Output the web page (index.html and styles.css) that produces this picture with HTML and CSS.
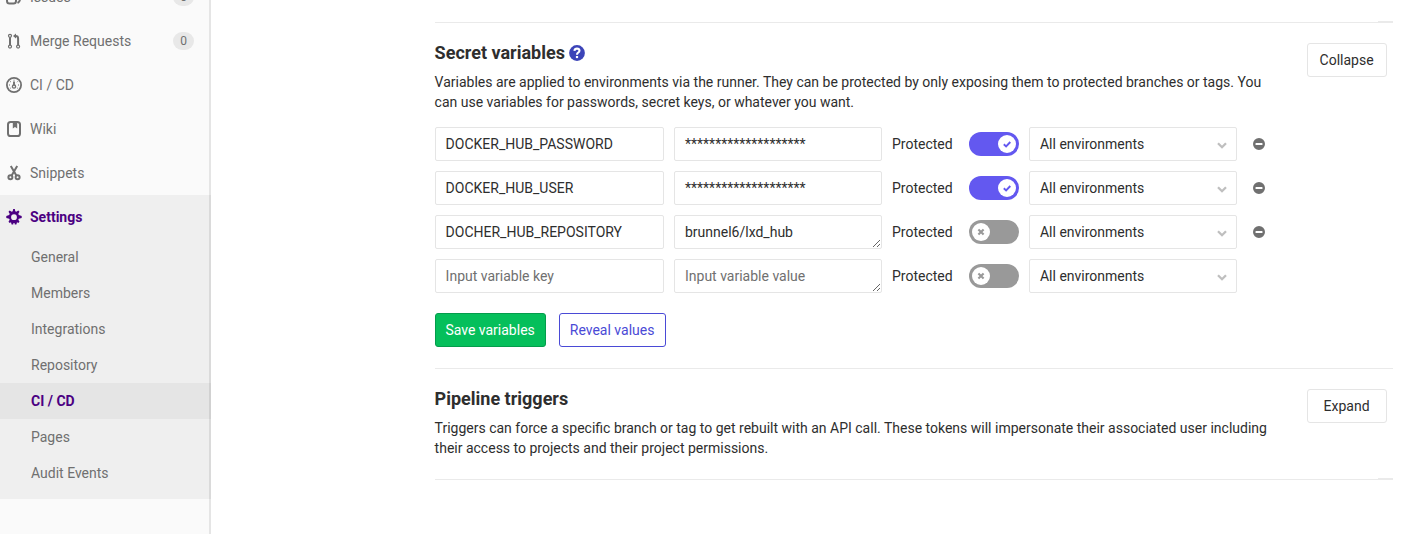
FILE: index.html
```html
<!DOCTYPE html>
<html lang="en">
<head>
<meta charset="utf-8">
<title>CI / CD Settings</title>
<link rel="stylesheet" href="styles.css">
</head>
<body>
<svg class="sprite" aria-hidden="true">
  <symbol id="check" viewBox="0 0 18 18"><path d="M5.800 9.300l2.300 2.200 4.200-4.500" fill="none" stroke="currentColor" stroke-width="1.900"/></symbol>
  <symbol id="cross" viewBox="0 0 18 18"><path d="M6.400 6.400l5.200 5.200M11.600 6.400l-5.200 5.200" fill="none" stroke="currentColor" stroke-width="2.100"/></symbol>
  <symbol id="chevron" viewBox="0 0 10 7"><path d="M1 1.200l4 4 4-4" fill="none" stroke="currentColor" stroke-width="2.300"/></symbol>
  <symbol id="minus" viewBox="0 0 12 12"><path fill="currentColor" fill-rule="evenodd" d="M6 0a6 6 0 1 0 0 12A6 6 0 0 0 6 0zM3 5h6q.5 0 .5.5v1q0 .5-.5.5H3q-.5 0-.5-.5v-1Q2.500 5 3 5z"/></symbol>
</svg>
<div class="page">
  <nav class="sidebar">
    <a class="item"><svg class="icon" viewBox="0 0 16 16"><g fill="none" stroke="currentColor" stroke-width="2"><rect x="1" y="3" width="9" height="11.500" rx="2.500"/><path d="M11 1.500c3 0 3 1 3 3v5.500c0 2-.5 3-2.500 4"/></g></svg><span>Issues</span><span class="badge">0</span></a>
    <a class="item"><svg class="icon" viewBox="0 0 16 16"><g fill="none" stroke="currentColor"><circle cx="4" cy="2.800" r="1.500" stroke-width="1.200"/><circle cx="4" cy="13.600" r="1.500" stroke-width="1.200"/><circle cx="12.100" cy="13.600" r="1.500" stroke-width="1.200"/><path d="M4 4.300v7.700M12.100 12V5.500q0-2.400-2.600-2.400" stroke-width="2"/></g><path d="M10 .4v5.200L7 3z" fill="currentColor"/></svg><span>Merge Requests</span><span class="badge">0</span></a>
    <a class="item"><svg class="icon" viewBox="0 0 16 16"><g fill="none" stroke="currentColor"><circle cx="8" cy="8" r="7.100" stroke-width="1.800"/><circle cx="8" cy="9.600" r="1.600" stroke-width="1.300"/><path d="M8 8V4.500" stroke-width="1.900"/><path d="M8 2.700v1M3 8h1M12 8h1M4.200 4.400l.8.800M11.800 4.400l-.8.800M4.300 11.300l.8-.6M11.700 11.300l-.8-.6"/></g></svg><span>CI / CD</span></a>
    <a class="item"><svg class="icon" viewBox="0 0 16 16"><rect x="2" y="1" width="12" height="14" rx="2.600" fill="none" stroke="currentColor" stroke-width="2"/><path d="M6.800 2h4.400v5.400L9 5.900 6.800 7.400z" fill="currentColor"/></svg><span>Wiki</span></a>
    <a class="item"><svg class="icon" viewBox="0 0 16 16"><g fill="none" stroke="currentColor" stroke-width="2"><circle cx="4.400" cy="12.300" r="2"/><circle cx="11.600" cy="12.300" r="2"/><path d="M5.500 10.700L11.200 1M10.500 10.700L4.800 1" stroke-width="2"/></g></svg><span>Snippets</span></a>
    <div class="group">
      <a class="item current"><svg class="icon" viewBox="0 0 16 16"><path fill="currentColor" fill-rule="evenodd" d="M6.700 2.300L7.200.1h1.600l.5 2.200 1 .4L12.300 1.500l1.200 1.200-1.200 2 .5 1.300 2.900.9v2.200l-2.900.6-.5 1.100 1.200 2-1.200 1.200-1.300-.7-.6 2.300H8.800l-.3-1.500h-1l-.3 1.500H5.600L5 13.300l-1.300.7-1.200-1.200 1.200-2-.5-1.100L.3 9.100V6.900L3.200 6l.5-1.300-1.200-2 1.200-1.200 2 1.200zM8 5.300a2.900 2.900 0 1 0 0 5.800 2.900 2.900 0 0 0 0-5.800z"/></svg><span>Settings</span></a>
      <a class="sub">General</a>
      <a class="sub">Members</a>
      <a class="sub">Integrations</a>
      <a class="sub">Repository</a>
      <a class="sub active">CI / CD</a>
      <a class="sub">Pages</a>
      <a class="sub">Audit Events</a>
    </div>
  </nav>
  <main class="content">
    <section class="settings previous"></section>
    <section class="settings secrets">
      <div class="heading">
        <div>
          <h4>Secret variables <svg class="help" viewBox="0 0 16 16"><circle cx="8" cy="8" r="7.900" fill="#3c44b8"/><path d="M5.400 5.900Q5.700 3.600 8 3.600t2.500 2q0 1.300-1.400 2.100Q8 8.300 8 9.700" fill="none" stroke="#fff" stroke-width="2.100"/><path d="M6.900 11h2.200v2.100H6.900z" fill="#fff"/></svg></h4>
          <p>Variables are applied to environments via the runner. They can be protected by only exposing them to protected branches or tags. You<br>can use variables for passwords, secret keys, or whatever you want.</p>
        </div>
        <button class="btn">Collapse</button>
      </div>
      <div class="variables">
        <div class="row">
          <input class="field key" value="DOCKER_HUB_PASSWORD"><div class="field value">********************</div>
          <span class="label">Protected</span><span class="toggle on"><svg><use href="#check"/></svg></span>
          <div class="field select">All environments<svg><use href="#chevron"/></svg></div><svg class="remove"><use href="#minus"/></svg>
        </div>
        <div class="row">
          <input class="field key" value="DOCKER_HUB_USER"><div class="field value">********************</div>
          <span class="label">Protected</span><span class="toggle on"><svg><use href="#check"/></svg></span>
          <div class="field select">All environments<svg><use href="#chevron"/></svg></div><svg class="remove"><use href="#minus"/></svg>
        </div>
        <div class="row">
          <input class="field key" value="DOCHER_HUB_REPOSITORY"><textarea class="field value" rows="1">brunnel6/lxd_hub</textarea>
          <span class="label">Protected</span><span class="toggle"><svg><use href="#cross"/></svg></span>
          <div class="field select">All environments<svg><use href="#chevron"/></svg></div><svg class="remove"><use href="#minus"/></svg>
        </div>
        <div class="row">
          <input class="field key" placeholder="Input variable key"><textarea class="field value" rows="1" placeholder="Input variable value"></textarea>
          <span class="label">Protected</span><span class="toggle"><svg><use href="#cross"/></svg></span>
          <div class="field select">All environments<svg><use href="#chevron"/></svg></div>
        </div>
      </div>
      <div class="actions"><button class="btn save">Save variables</button><button class="btn reveal">Reveal values</button></div>
    </section>
    <section class="settings triggers">
      <div class="heading">
        <div>
          <h4>Pipeline triggers</h4>
          <p>Triggers can force a specific branch or tag to get rebuilt with an API call. These tokens will impersonate their associated user including<br>their access to projects and their project permissions.</p>
        </div>
        <button class="btn">Expand</button>
      </div>
    </section>
  </main>
</div>
</body>
</html>
```
FILE: styles.css
```css
* { box-sizing: border-box; }
body { margin: 0; background: #fff; color: #2e2e2e; font: 14px/20px Roboto, "Noto Sans", sans-serif; overflow: hidden; }
.sprite { display: none; }
.page { display: flex; height: 534px; overflow: hidden; }

.sidebar { flex: none; width: 211px; background: #fafafa; box-shadow: inset -2px 0 0 #e5e5e5; color: #707070; }
.item { display: flex; align-items: center; height: 44px; padding: 0 17px 0 6px; }
.item:first-child { margin-top: -25px; }
.icon { flex: none; width: 16px; height: 16px; margin-right: 8px; }
.badge { margin-left: auto; width: 21px; height: 18px; border-radius: 9px; background: #e8e8e8; font-size: 12px; line-height: 18px; text-align: center; }
.group { background: rgba(0, 0, 0, 0.045); padding-bottom: 8px; box-shadow: inset -2px 0 0 #dadada; }
.group .item:first-child { margin-top: 0; }
.item.current, .sub.active { color: #4b0082; font-weight: 700; }
.sub { display: block; height: 36px; padding-left: 31px; line-height: 36px; }
.sub.active { background: rgba(0, 0, 0, 0.04); }

.content { width: 958px; margin-left: 223.6px; }
.settings { border-bottom: 1px solid #eaeaea; padding-top: 20px; }
.settings.previous { height: 23px; }
.settings.secrets { height: 346px; }
.settings.triggers { height: 111px; }
.previous::after, .triggers::after { content: ""; display: block; width: 15px; height: 1px; margin-left: auto; background: #eaeaea; }
.previous::after { margin-top: 1px; }
.triggers::after { margin-top: 20px; }
.heading { display: flex; justify-content: space-between; align-items: flex-start; height: 69px; padding-right: 6px; }
h4 { display: flex; align-items: center; gap: 4.500px; margin: 0; font-size: 18px; line-height: 20px; font-weight: 700; }
.help { width: 16px; height: 16px; }
p { margin: 9px 0 0; white-space: nowrap; }

.btn { flex: none; width: 80px; height: 34px; padding: 0; border: 1px solid #e5e5e5; border-radius: 3px; background: #fff; color: #2e2e2e; font: inherit; }
.btn.save { width: 111px; background: #05bf5b; border-color: #049c4c; color: #fff; }
.btn.reveal { width: 107px; border-color: #4a4ad6; color: #4a4ad6; }
.actions { display: flex; gap: 13px; margin-top: 20px; }

.variables { display: grid; gap: 10px; margin-top: 15px; }
.row { display: flex; align-items: center; height: 34px; }
.field { flex: none; height: 34px; margin: 0; padding: 6px 10px; border: 1px solid #e5e5e5; border-radius: 2px; background: #fff; color: #2e2e2e; font: inherit; outline: 0; }
.field::placeholder { color: #707070; opacity: 1; }
.key { width: 229px; margin-right: 10.400px; }
.value { width: 208px; }
textarea { overflow: hidden; resize: both; }
.label { width: 87px; padding-left: 10px; }
.toggle { display: flex; align-items: center; width: 50px; height: 24px; margin-right: 10px; padding: 3px; border-radius: 12px; background: #999; color: #999; }
.toggle.on { justify-content: flex-end; background: #6358f0; color: #6358f0; }
.toggle svg { width: 18px; height: 18px; border-radius: 50%; background: #fff; }
.select { display: flex; align-items: center; justify-content: space-between; width: 208px; padding-right: 9px; }
.select svg { width: 10px; height: 7px; margin-top: 3px; color: #bfbfbf; }
.remove { width: 12px; height: 12px; margin-left: 16.500px; color: #707070; }
```
